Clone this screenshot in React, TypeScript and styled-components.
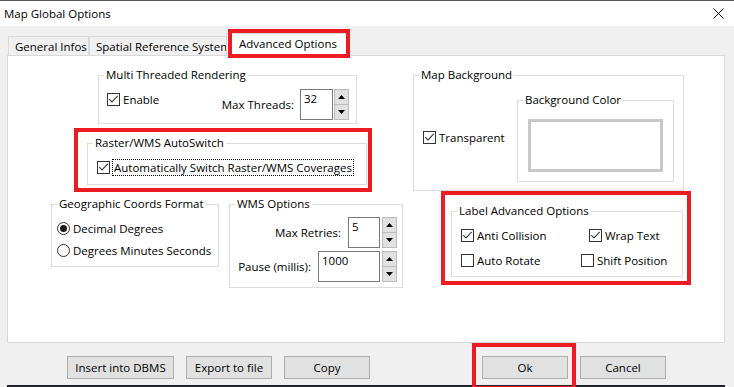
import React from "react";
import styled, { createGlobalStyle } from "styled-components";

const GlobalStyle = createGlobalStyle`
  html, body { margin: 0; padding: 0; background: #f0f0f0; }
  body {
    font-family: "Open Sans", "Noto Sans", "DejaVu Sans", sans-serif;
    font-size: 11.5px;
    color: #000;
  }
  *, *::before, *::after { box-sizing: border-box; }
`;

const RED = "#ed1c24";

const Window = styled.div`
  position: relative;
  width: 734px;
  height: 387px;
  overflow: hidden;
  display: flex;
  flex-direction: column;
  background: #f0f0f0;
`;

const TitleBar = styled.div`
  flex: none;
  height: 26px;
  display: flex;
  align-items: center;
  justify-content: space-between;
  padding: 0 10px 0 4px;
  background: #fff;
  border-top: 1px solid #5b5b5b;
`;

const Title = styled.span`
  line-height: 16px;
`;

const Body = styled.div`
  flex: 1;
  display: flex;
  flex-direction: column;
  padding: 7px 9px 0 7px;
`;

const TabStrip = styled.div`
  position: relative;
  z-index: 1;
  flex: none;
  display: flex;
  align-items: flex-end;
  height: 22px;
  padding-left: 1px;
`;

const Tab = styled.div<{ $active?: boolean; $w: number; $pl: number }>`
  position: relative;
  z-index: ${(p) => (p.$active ? 1 : 0)};
  flex: none;
  display: flex;
  align-items: center;
  width: ${(p) => p.$w}px;
  height: ${(p) => (p.$active ? 23 : 19)}px;
  margin: 0 ${(p) => (p.$active ? -2 : 0)}px ${(p) => (p.$active ? -1 : 0)}px
    ${(p) => (p.$active ? -2 : 0)}px;
  padding: 0 0 ${(p) => (p.$active ? 3 : 0)}px ${(p) => p.$pl}px;
  white-space: nowrap;
  background: ${(p) => (p.$active ? "#fff" : "#f0f0f0")};
  border: 1px solid #d9d9d9;
  border-bottom: none;
  ${(p) =>
    p.$active
      ? `&::after {
    content: "";
    position: absolute;
    top: -5px; left: 1px; right: -4px; bottom: -2px;
    border: 4px solid ${RED};
    pointer-events: none;
  }`
      : ""}
`;

const Panel = styled.div`
  flex: none;
  height: 288px;
  display: flex;
  gap: 10px;
  padding: 11px 0 0 43px;
  background: #fff;
  border: 1px solid #d9d9d9;
`;

const LeftCol = styled.div`
  width: 352px;
  display: flex;
  flex-direction: column;
  align-items: flex-start;
`;

const RightCol = styled.div`
  display: flex;
  flex-direction: column;
  align-items: flex-start;
`;

const Row = styled.div<{ $gap?: number }>`
  display: flex;
  align-items: flex-start;
  gap: ${(p) => p.$gap ?? 0}px;
`;

const Group = styled.fieldset<{ $w: number; $h: number; $ml?: number; $mt?: number }>`
  flex: none;
  margin: ${(p) => p.$mt ?? 0}px 0 0 ${(p) => p.$ml ?? 0}px;
  padding: 0;
  min-width: 0;
  width: ${(p) => p.$w}px;
  height: ${(p) => p.$h}px;
  border: 1px solid #dcdcdc;
`;

const Legend = styled.legend`
  margin-left: 5px;
  padding: 0 2px;
  height: 16px;
  line-height: 16px;
  white-space: nowrap;
`;

const RedFrame = styled.div<{ $w: number; $h: number; $ml?: number; $mt?: number; $pad: string }>`
  flex: none;
  width: ${(p) => p.$w}px;
  height: ${(p) => p.$h}px;
  margin: ${(p) => p.$mt ?? 0}px 0 0 ${(p) => p.$ml ?? 0}px;
  padding: ${(p) => p.$pad};
  border: 4px solid ${RED};
`;

const GroupContent = styled.div<{ $pad: string }>`
  padding: ${(p) => p.$pad};
`;

const SpreadRow = styled.div<{ $pad: string; $align?: string }>`
  display: flex;
  justify-content: space-between;
  align-items: ${(p) => p.$align ?? "flex-start"};
  padding: ${(p) => p.$pad};
`;

const StackRows = styled.div<{ $pad: string; $gap: number; $align?: string }>`
  display: flex;
  flex-direction: column;
  align-items: ${(p) => p.$align ?? "flex-start"};
  gap: ${(p) => p.$gap}px;
  padding: ${(p) => p.$pad};
`;

const OptionGrid = styled.div`
  display: grid;
  grid-template-columns: 120px auto;
  row-gap: 8px;
  padding: 8px 0 0 9px;
`;

const CheckLabel = styled.label<{ $mt?: number; $ml?: number }>`
  display: inline-flex;
  align-items: center;
  gap: 3px;
  height: 17px;
  line-height: 17px;
  white-space: nowrap;
  margin: ${(p) => p.$mt ?? 0}px 0 0 ${(p) => p.$ml ?? 0}px;
`;

const CheckBox = styled.span`
  flex: none;
  width: 13px;
  height: 13px;
  display: inline-flex;
  align-items: center;
  justify-content: center;
  background: #fff;
  border: 1px solid #333;
`;

const RadioCircle = styled.span<{ $on?: boolean }>`
  flex: none;
  width: 13px;
  height: 13px;
  border-radius: 50%;
  border: 1px solid #333;
  background: #fff;
  display: inline-flex;
  align-items: center;
  justify-content: center;
  &::after {
    content: "";
    width: 7px;
    height: 7px;
    border-radius: 50%;
    background: ${(p) => (p.$on ? "#1a1a1a" : "transparent")};
  }
`;

const FocusText = styled.span`
  border: 1px dotted #000;
  padding: 0 1px;
  line-height: 15px;
  margin-left: -1px;
`;

const SpinRow = styled.div<{ $gap: number }>`
  display: flex;
  align-items: center;
  justify-content: flex-end;
  gap: ${(p) => p.$gap}px;
`;

const FieldLabel = styled.span`
  margin-right: 5px;
  white-space: nowrap;
`;

const NumInput = styled.div<{ $w: number }>`
  width: ${(p) => p.$w}px;
  height: 31px;
  padding: 1px 0 0 3px;
  line-height: 16px;
  background: #fff;
  border: 1px solid #7a7a7a;
`;

const Spinner = styled.div`
  width: 15px;
  height: 31px;
  display: flex;
  flex-direction: column;
`;

const SpinButton = styled.div`
  flex: 1;
  display: flex;
  align-items: center;
  justify-content: center;
  background: #e1e1e1;
  border: 1px solid #bcbcbc;
  & + & { border-top: none; }
`;

const ColorBox = styled.div`
  width: 135px;
  height: 53px;
  background: #fff;
  border: 3px solid #c8c8c8;
`;

const ButtonRow = styled.div`
  flex: none;
  display: flex;
  gap: 12px;
  margin-top: 13px;
  padding-left: 60px;
`;

const Button = styled.div<{ $w: number; $ml?: number; $marked?: boolean }>`
  position: relative;
  width: ${(p) => p.$w}px;
  height: 23px;
  margin-left: ${(p) => p.$ml ?? 0}px;
  display: flex;
  align-items: center;
  justify-content: center;
  background: #e1e1e1;
  border: 1px solid #adadad;
  white-space: nowrap;
  ${(p) =>
    p.$marked
      ? `&::after {
    content: "";
    position: absolute;
    top: -14px; left: -11px; right: -9px; bottom: -12px;
    border: 4px solid ${RED};
    pointer-events: none;
  }`
      : ""}
`;

const BottomEdge = styled.div`
  flex: none;
  height: 2px;
  margin-top: auto;
  background: #22222a;
`;

const Tick = () => (
  <svg width="11" height="11" viewBox="0 0 11 11">
    <polyline points="1.2,5.2 4,8 9.8,1.8" fill="none" stroke="#3a3a3a" strokeWidth="1.1" />
  </svg>
);

const Check = ({ checked, children, mt, ml }: { checked?: boolean; children: React.ReactNode; mt?: number; ml?: number }) => (
  <CheckLabel $mt={mt} $ml={ml}>
    <CheckBox>{checked && <Tick />}</CheckBox>
    {children}
  </CheckLabel>
);

const Radio = ({ on, children }: { on?: boolean; children: React.ReactNode }) => (
  <CheckLabel>
    <RadioCircle $on={on} />
    {children}
  </CheckLabel>
);

const Arrow = ({ up }: { up?: boolean }) => (
  <svg width="7" height="4" viewBox="0 0 7 4">
    <polygon points={up ? "0,4 7,4 3.5,0" : "0,0 7,0 3.5,4"} fill="#000" />
  </svg>
);

const Spin = ({ label, value, w, gap }: { label: string; value: string; w: number; gap: number }) => (
  <SpinRow $gap={gap}>
    <FieldLabel>{label}</FieldLabel>
    <NumInput $w={w}>{value}</NumInput>
    <Spinner>
      <SpinButton>
        <Arrow up />
      </SpinButton>
      <SpinButton>
        <Arrow />
      </SpinButton>
    </Spinner>
  </SpinRow>
);

const CloseIcon = () => (
  <svg width="11" height="11" viewBox="0 0 11 11">
    <path d="M0.5 0.5 L10.5 10.5 M10.5 0.5 L0.5 10.5" stroke="#000" strokeWidth="1" fill="none" />
  </svg>
);

export default function App() {
  return (
    <>
      <GlobalStyle />
      <Window>
        <TitleBar>
          <Title>Map Global Options</Title>
          <CloseIcon />
        </TitleBar>
        <Body>
          <TabStrip>
            <Tab $w={81} $pl={6}>General Infos</Tab>
            <Tab $w={139} $pl={6}>Spatial Reference System</Tab>
            <Tab $w={121} $pl={12} $active>
              Advanced Options
            </Tab>
          </TabStrip>
          <Panel>
            <LeftCol>
              <Group $w={259} $h={57} $ml={47}>
                <Legend>Multi Threaded Rendering</Legend>
                <SpreadRow $pad="6px 7px 0 8px">
                  <Check checked mt={2}>
                    Enable
                  </Check>
                  <Spin label="Max Threads:" value="32" w={33} gap={1} />
                </SpreadRow>
              </Group>

              <RedFrame $w={298} $h={64} $ml={23} $mt={4} $pad="3px 1px 3px 9px">
                <Group $w={280} $h={50}>
                  <Legend>Raster/WMS AutoSwitch</Legend>
                  <GroupContent $pad="8px 0 0 9px">
                    <CheckLabel>
                      <CheckBox>
                        <Tick />
                      </CheckBox>
                      <FocusText>Automatically Switch Raster/WMS Coverages</FocusText>
                    </CheckLabel>
                  </GroupContent>
                </Group>
              </RedFrame>

              <Row $gap={10}>
                <Group $w={168} $h={71} $mt={4}>
                  <Legend>Geographic Coords Format</Legend>
                  <StackRows $pad="8px 0 0 5px" $gap={5}>
                    <Radio on>Decimal Degrees</Radio>
                    <Radio>Degrees Minutes Seconds</Radio>
                  </StackRows>
                </Group>
                <Group $w={174} $h={92} $mt={4}>
                  <Legend>WMS Options</Legend>
                  <StackRows $pad="5px 5px 0 0" $gap={3} $align="flex-end">
                    <Spin label="Max Retries:" value="5" w={32} gap={2} />
                    <Spin label="Pause (millis):" value="1000" w={62} gap={2} />
                  </StackRows>
                </Group>
              </Row>
            </LeftCol>

            <RightCol>
              <Group $w={271} $h={124}>
                <Legend>Map Background</Legend>
                <SpreadRow $pad="9px 9px 0 9px" $align="center">
                  <Check checked>Transparent</Check>
                  <Group $w={157} $h={90}>
                    <Legend>Background Color</Legend>
                    <GroupContent $pad="11px 0 0 10px">
                      <ColorBox />
                    </GroupContent>
                  </Group>
                </SpreadRow>
              </Group>

              <RedFrame $w={250} $h={94} $ml={28} $pad="8px 3px 4px 6px">
                <Group $w={232} $h={74}>
                  <Legend>Label Advanced Options</Legend>
                  <OptionGrid>
                    <Check checked>Anti Collision</Check>
                    <Check checked ml={8}>
                      Wrap Text
                    </Check>
                    <Check>Auto Rotate</Check>
                    <Check>Shift Position</Check>
                  </OptionGrid>
                </Group>
              </RedFrame>
            </RightCol>
          </Panel>

          <ButtonRow>
            <Button $w={107}>Insert into DBMS</Button>
            <Button $w={86}>Export to file</Button>
            <Button $w={86}>Copy</Button>
            <Button $w={86} $ml={100} $marked>
              Ok
            </Button>
            <Button $w={86}>Cancel</Button>
          </ButtonRow>
          <BottomEdge />
        </Body>
      </Window>
    </>
  );
}
